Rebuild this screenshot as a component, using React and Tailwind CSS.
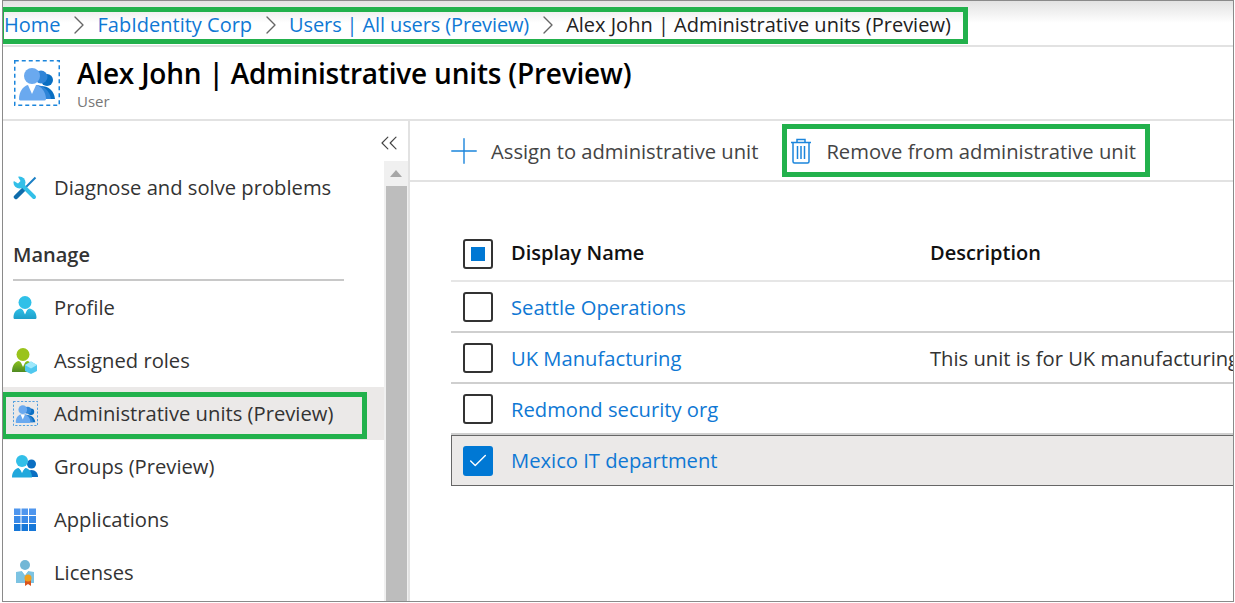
import React from "react";
import { ChevronRight, ChevronsLeft, Plus, Check } from "lucide-react";

const PersonIcon = ({ id, top, bottom, size = 24 }) => (
  <svg width={size} height={size} viewBox="0 0 24 24">
    <defs>
      <linearGradient id={id} x1="0" y1="0" x2="0" y2="1">
        <stop offset="0" stopColor={top} />
        <stop offset="1" stopColor={bottom} />
      </linearGradient>
    </defs>
    <circle cx="12" cy="6.500" r="6.500" fill={top} />
    <path d="M.5 21.500c0-5 3-8.500 7.500-9l4 3 4-3c4.500.5 7.500 4 7.500 9 0 1-.7 1.500-1.500 1.500H2C1.200 23 .5 22.500.5 21.500z" fill={`url(#${id})`} />
    <path d="M9.500 13h5L12 18.500z" fill="#fff" />
  </svg>
);

const AdminIcon = ({ size }) => (
  <svg width={size} height={size} viewBox="0 0 46 46">
    <rect x="0.750" y="0.750" width="44.500" height="44.500" fill="none" stroke="#1b85dc" strokeWidth="1.500" strokeDasharray="4 3" />
    <circle cx="33" cy="20" r="6" fill="#0a6fc2" />
    <path d="M27 26c7 0 13 4 14 13H27z" fill="#0a6fc2" />
    <circle cx="27" cy="17" r="6.500" fill="#2f85d8" />
    <path d="M20 25c8-1 16 5 17 14H20z" fill="#2f85d8" />
    <circle cx="18" cy="16" r="8" fill="#6aa9ef" />
    <path d="M5 39c0-7 4-13 9-14h8c5 1 10 7 10 14 0 1-1 1.500-2 1.500H7c-1 0-2-.5-2-1.500z" fill="#6aa9ef" />
    <path d="M14 25h8l-4 9z" fill="#fff" />
  </svg>
);

const WrenchIcon = () => (
  <svg width="24" height="24" viewBox="0 0 24 24">
    <path d="M22.500 1.500L11 13" stroke="#1a7fc4" strokeWidth="2" />
    <path d="M11.500 12.500L3 21" stroke="#0f6cab" strokeWidth="4.500" strokeLinecap="round" />
    <path d="M7 7l14 14" stroke="#32bfe8" strokeWidth="4" strokeLinecap="round" />
    <circle cx="6.500" cy="6.500" r="6" fill="#32bfe8" />
    <path d="M4-1L7.500 5 5 7.500-1 4V-1z" fill="#fff" />
  </svg>
);

const RolesIcon = () => (
  <svg width="26" height="26" viewBox="0 0 26 26">
    <defs>
      <linearGradient id="roleBody" x1="0" y1="0" x2="0" y2="1">
        <stop offset="0" stopColor="#8cc21f" />
        <stop offset="1" stopColor="#4f8a22" />
      </linearGradient>
    </defs>
    <circle cx="11" cy="6.500" r="6.500" fill="#9ac31c" />
    <path d="M0 24c0-6.500 3-10.500 7-11l4 3 4-3c4 .5 7 4.500 7 11z" fill="url(#roleBody)" />
    <path d="M8.500 13.500h5L11 19z" fill="#fff" />
    <path d="M13 17l6-3.500 6 3.500v6l-6 3-6-3z" fill="#50c8ef" />
    <path d="M13 17l6 3.500 6-3.500-6-3.500z" fill="#9ee8fb" />
  </svg>
);

const GroupsIcon = () => (
  <svg width="26" height="24" viewBox="0 0 26 24">
    <circle cx="19.500" cy="9" r="4.500" fill="#0a6fc2" />
    <path d="M13 22c0-4 2.500-7 6.500-7s6.500 3 6.500 7z" fill="#0a6fc2" />
    <circle cx="10" cy="6" r="6" fill="#32bfe8" />
    <path d="M0 22.500c0-5.500 3-9 6.500-9.500l3.500 3 3.500-3c3.500.5 6.500 4 6.500 9.500z" fill="#21a8dc" />
    <path d="M7.500 13h5L10 18z" fill="#fff" />
  </svg>
);

const AppsIcon = () => (
  <svg width="24" height="24" viewBox="0 0 24 24">
    <rect x="1" y="0.500" width="6.500" height="6.500" fill="#4f96ee" />
    <rect x="8.500" y="0.500" width="6.500" height="6.500" fill="#4f96ee" />
    <rect x="16" y="0.500" width="7" height="6.500" fill="#4f96ee" />
    <rect x="1" y="8" width="6.500" height="7" fill="#3a8ae8" />
    <rect x="8.500" y="8" width="6.500" height="7" fill="#3a8ae8" />
    <rect x="16" y="8" width="7" height="7" fill="#3a8ae8" />
    <rect x="1" y="16" width="6.500" height="7" fill="#1677d8" />
    <rect x="8.500" y="16" width="6.500" height="7" fill="#1677d8" />
    <rect x="16" y="16" width="7" height="7" fill="#1677d8" />
  </svg>
);

const LicenseIcon = () => (
  <svg width="24" height="26" viewBox="0 0 24 26">
    <circle cx="12" cy="5" r="5" fill="#72b7d6" />
    <path d="M3 12l6-1 3 4 3-4 6 1v11H3z" fill="#7cc3e2" />
    <path d="M12 15l-3-4h6z" fill="#fff" />
    <path d="M12 20h6v6l-3-2-3 2z" fill="#d9541e" />
    <circle cx="15" cy="18" r="3.500" fill="#f0a01e" />
  </svg>
);

const TrashIcon = () => (
  <svg width="22" height="26" viewBox="0 0 22 26" fill="none" stroke="#1b85dc" strokeWidth="1.500">
    <path d="M1 4.500h20M7 4.500V1.500h8v3M3 4.500v19c0 .8.500 1.500 1.500 1.500h13c1 0 1.500-.7 1.500-1.500v-19" />
    <path d="M7.500 8v13M11 8v13M14.500 8v13" />
  </svg>
);

const Crumb = ({ label, tight }) => (
  <>
    <a className={`text-[#0f78d4] ${tight ? "tracking-[-0.12px]" : ""}`}>{label}</a>
    <span className="flex w-[37px] justify-center">
      <ChevronRight size={32} strokeWidth={1} className="text-[#666]" />
    </span>
  </>
);

const NavItem = ({ icon, label, active }) => (
  <div className={`flex h-[53px] items-center text-[20.2px] text-[#333] ${active ? "bg-[#ebe9e8]" : ""}`}>
    <span className="flex w-[44px] justify-center">{icon}</span>
    <span className="ml-[7px]">{label}</span>
  </div>
);

const Box = ({ children, filled }) => (
  <span className={`flex h-[30px] w-[30px] shrink-0 items-center justify-center rounded-[3px] ${filled ? "bg-[#0078d4]" : "border-2 border-[#333]"}`}>
    {children}
  </span>
);

const Row = ({ name, description, selected }) => (
  <div className={`flex h-[51px] items-center text-[20.2px] ${selected ? "border-y border-l border-[#666] bg-[#ebe9e8] pl-[11px]" : "border-b-2 border-[#cfcfcf] pl-[12px] pt-[1px]"}`}>
    <Box filled={selected}>{selected && <Check size={22} strokeWidth={1.500} className="text-white" />}</Box>
    <a className="ml-[18px] w-[419px] shrink-0 text-[#0f78d4]">{name}</a>
    <span className="whitespace-nowrap text-[#333]">{description}</span>
  </div>
);

export default function App() {
  return (
    <div className="h-[603px] w-[1235px] overflow-hidden bg-white pb-px pl-[2px] pr-px font-['Open_Sans',sans-serif] text-[20px]">
      <div className="flex h-full flex-col overflow-hidden border border-[#8a8a8a]">
        {/* Breadcrumb */}
        <div className="h-[46px] shrink-0 border-b-2 border-[#e2e2e2] bg-gradient-to-b from-[#e2e2e2] to-white to-50% pt-[6px]">
          <div className="relative -ml-[3px] flex h-[37px] w-[968px] items-center whitespace-nowrap border-[5px] border-l-4 border-[#22b14c] pb-[2px] text-[#222]">
            <Crumb label="Home" />
            <Crumb label="FabIdentity Corp" />
            <Crumb label="Users | All users (Preview)" tight />
            <span>Alex John | Administrative units (Preview)</span>
          </div>
        </div>

        {/* Title */}
        <div className="flex h-[74px] shrink-0 items-center border-b-2 border-[#e2e2e2] pl-[11px]">
          <AdminIcon size={46} />
          <div className="ml-[17px]">
            <h1 className="-mt-[2px] text-[28px] font-semibold leading-[38px] tracking-[-0.2px] text-black">Alex John | Administrative units (Preview)</h1>
            <p className="text-[15px] leading-[18px] text-[#777]">User</p>
          </div>
        </div>

        <div className="flex min-h-0 flex-1">
          {/* Sidebar */}
          <aside className="flex w-[407px] shrink-0 border-r-2 border-[#e2e2e2]">
            <div className="w-[381px] shrink-0 pt-[40px]">
              <NavItem icon={<WrenchIcon />} label="Diagnose and solve problems" />
              <div className="mx-[10px] mt-[27px] w-[331px] border-b-2 border-[#c8c8c8] pb-[10px] font-semibold leading-[28px] text-[#333]">Manage</div>
              <NavItem icon={<PersonIcon id="profile" top="#2fc0e8" bottom="#1d9fc9" />} label="Profile" />
              <NavItem icon={<RolesIcon />} label="Assigned roles" />
              <div className="relative">
                <NavItem icon={<AdminIcon size={25} />} label="Administrative units (Preview)" active />
                <div className="absolute -left-[2px] top-[5px] h-[47px] w-[366px] border-[5px] border-[#22b14c]" />
              </div>
              <NavItem icon={<GroupsIcon />} label="Groups (Preview)" />
              <NavItem icon={<AppsIcon />} label="Applications" />
              <NavItem icon={<LicenseIcon />} label="Licenses" />
            </div>
            {/* Collapse button sits above the scrollbar track */}
            <div className="flex w-[24px] flex-col">
              <div className="h-[40px] pt-[8px]">
                <ChevronsLeft size={28} strokeWidth={1} className="-ml-[9px] text-[#444]" />
              </div>
              <div className="flex flex-1 flex-col items-center bg-[#f0f0f0]">
                <span className="mt-[9px] h-0 w-0 border-x-[6px] border-b-[7px] border-x-transparent border-b-[#a6a6a6]" />
                <div className="mt-[9px] w-[21px] flex-1 bg-[#bdbdbd]" />
              </div>
            </div>
          </aside>

          {/* Content */}
          <main className="min-w-0 flex-1">
            <div className="flex h-[61px] items-center border-b-2 border-[#e2e2e2] text-[20.2px] text-[#444]">
              <Plus size={42} strokeWidth={0.800} className="ml-[33px] text-[#1b85dc]" />
              <span className="ml-[6px] pt-[2px]">Assign to administrative unit</span>
              <div className="ml-[24px] flex h-[53px] w-[368px] items-center border-[5px] border-[#22b14c] pl-[3px]">
                <TrashIcon />
                <span className="ml-[14px] whitespace-nowrap pt-[2px]">Remove from administrative unit</span>
              </div>
            </div>
            <div className="ml-[41px] mt-[45px] overflow-hidden">
              <div className="flex h-[55px] items-center border-b-2 border-[#e6e6e6] pl-[12px] font-semibold text-[#111]">
                <Box><span className="h-[14px] w-[14px] bg-[#0078d4]" /></Box>
                <span className="ml-[18px] w-[419px] shrink-0 pb-[2px]">Display Name</span>
                <span className="pb-[2px]">Description</span>
              </div>
              <Row name="Seattle Operations" />
              <Row name="UK Manufacturing" description="This unit is for UK manufacturing" />
              <Row name="Redmond security org" />
              <Row name="Mexico IT department" selected />
            </div>
          </main>
        </div>
      </div>
    </div>
  );
}
